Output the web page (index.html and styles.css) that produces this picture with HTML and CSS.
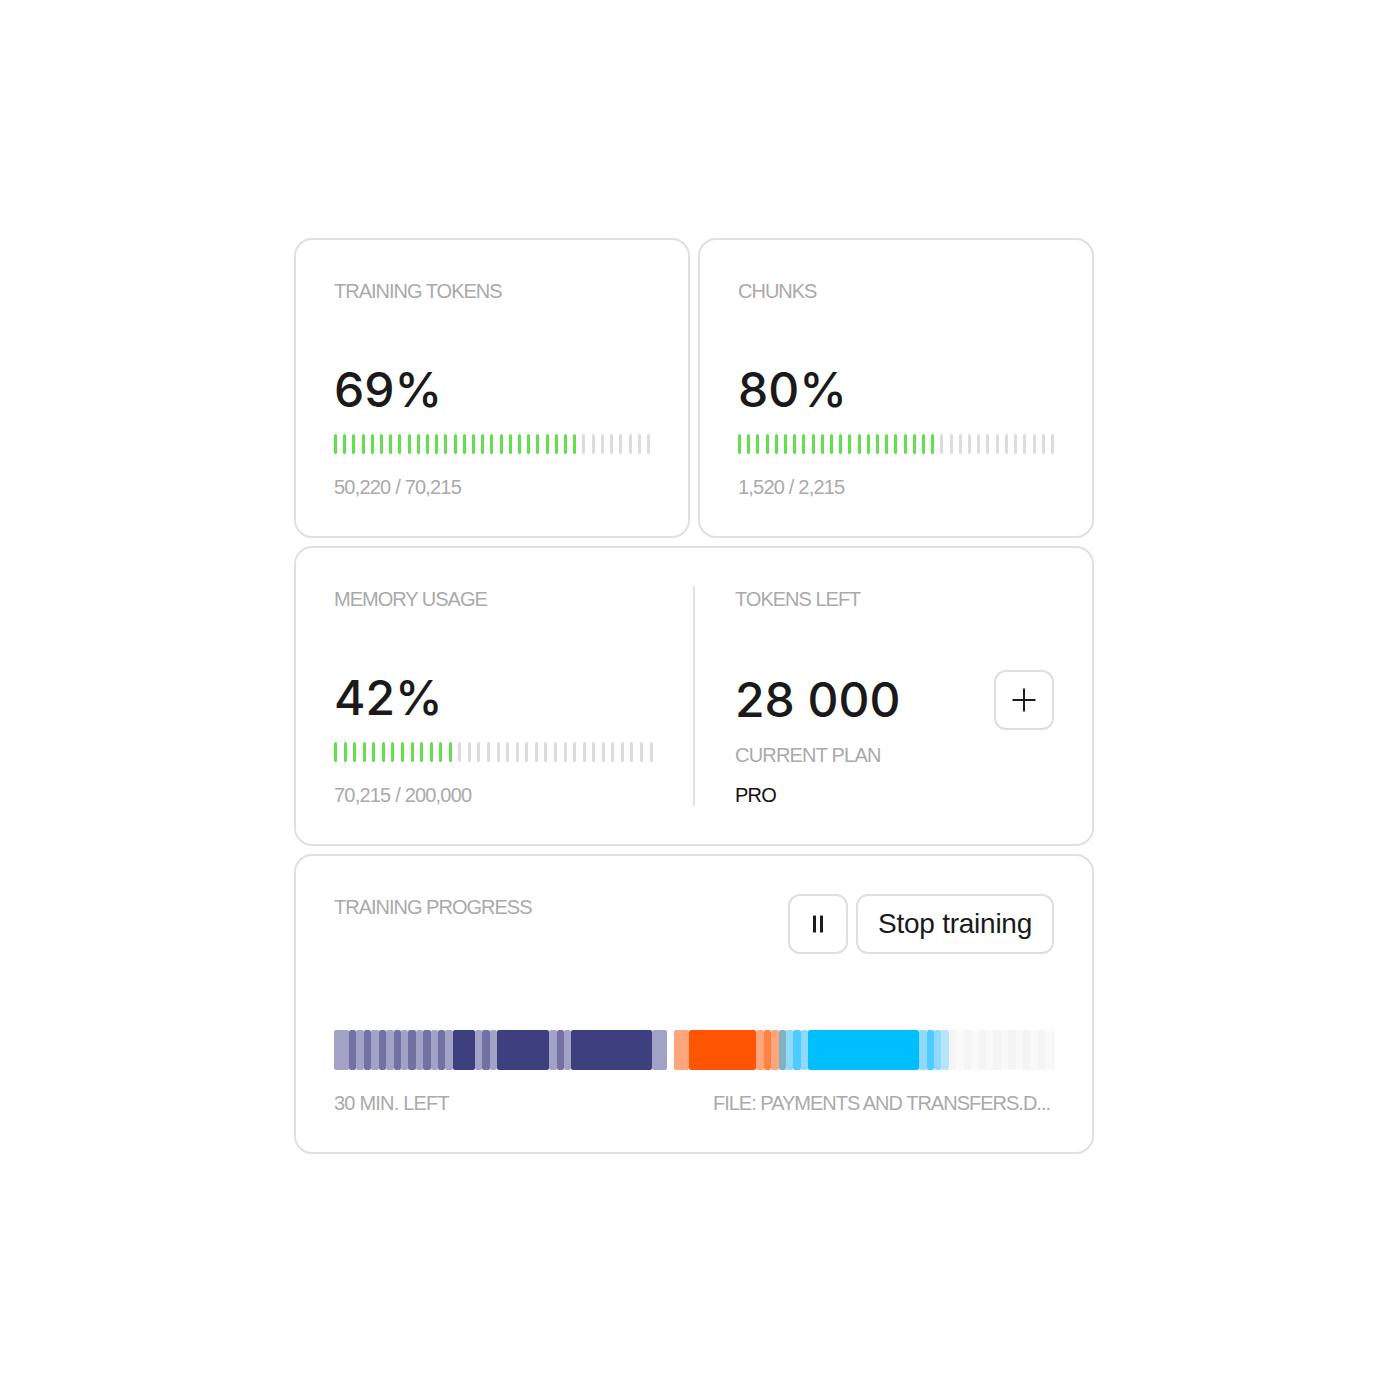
FILE: index.html
```html
<!DOCTYPE html>
<html lang="en">
<head>
<meta charset="utf-8">
<title>Training dashboard</title>
<link rel="stylesheet" href="styles.css">
</head>
<body>
<main class="board">
  <div class="row-two">
    <section class="card">
      <div class="label">TRAINING TOKENS</div>
      <div class="stat-bottom">
        <div class="big">69%</div>
        <div class="ticks">
          <i class="on"></i><i class="on"></i><i class="on"></i><i class="on"></i><i class="on"></i><i class="on"></i><i class="on"></i><i class="on"></i><i class="on"></i><i class="on"></i><i class="on"></i><i class="on"></i><i class="on"></i><i class="on"></i><i class="on"></i><i class="on"></i><i class="on"></i><i class="on"></i><i class="on"></i><i class="on"></i><i class="on"></i><i class="on"></i><i class="on"></i><i class="on"></i><i class="on"></i><i class="on"></i><i class="on"></i><i></i><i></i><i></i><i></i><i></i><i></i><i></i><i></i>
        </div>
        <div class="sub">50,220 / 70,215</div>
      </div>
    </section>
    <section class="card">
      <div class="label">CHUNKS</div>
      <div class="stat-bottom">
        <div class="big">80%</div>
        <div class="ticks">
          <i class="on"></i><i class="on"></i><i class="on"></i><i class="on"></i><i class="on"></i><i class="on"></i><i class="on"></i><i class="on"></i><i class="on"></i><i class="on"></i><i class="on"></i><i class="on"></i><i class="on"></i><i class="on"></i><i class="on"></i><i class="on"></i><i class="on"></i><i class="on"></i><i class="on"></i><i class="on"></i><i class="on"></i><i class="on"></i><i></i><i></i><i></i><i></i><i></i><i></i><i></i><i></i><i></i><i></i><i></i><i></i><i></i>
        </div>
        <div class="sub">1,520 / 2,215</div>
      </div>
    </section>
  </div>

  <section class="card split">
    <div class="half">
      <div class="label">MEMORY USAGE</div>
      <div class="stat-bottom">
        <div class="big">42%</div>
        <div class="ticks">
          <i class="on"></i><i class="on"></i><i class="on"></i><i class="on"></i><i class="on"></i><i class="on"></i><i class="on"></i><i class="on"></i><i class="on"></i><i class="on"></i><i class="on"></i><i class="on"></i><i class="on"></i><i></i><i></i><i></i><i></i><i></i><i></i><i></i><i></i><i></i><i></i><i></i><i></i><i></i><i></i><i></i><i></i><i></i><i></i><i></i><i></i><i></i>
        </div>
        <div class="sub">70,215 / 200,000</div>
      </div>
    </div>
    <div class="divider"></div>
    <div class="half">
      <div class="label">TOKENS LEFT</div>
      <div class="stat-bottom">
        <div class="num-row">
          <div class="big">28 000</div>
          <button class="icon-btn" type="button" aria-label="Add tokens">
            <svg width="24" height="24" viewBox="0 0 24 24" fill="none" stroke="#1c1c1c" stroke-width="2" stroke-linecap="butt"><path d="M12 0.5V23.5M0.5 12H23.5"/></svg>
          </button>
        </div>
        <div class="sub plan-label">CURRENT PLAN</div>
        <div class="sub plan">PRO</div>
      </div>
    </div>
  </section>

  <section class="card">
    <div class="head">
      <div class="label">TRAINING PROGRESS</div>
      <div class="actions">
        <button class="icon-btn" type="button" aria-label="Pause">
          <svg width="12" height="18" viewBox="0 0 12 18" fill="#1c1c1c"><rect x="1" y="0.5" width="3" height="17" rx="0.5"/><rect x="8" y="0.5" width="3" height="17" rx="0.5"/></svg>
        </button>
        <button class="text-btn" type="button">Stop training</button>
      </div>
    </div>
    <div class="stat-bottom">
      <div class="bar">
        <div class="group">
          <span class="seg l" style="width:15px"></span>
          <span class="seg d" style="width:7.43px"></span><span class="seg l" style="width:7.43px"></span>
          <span class="seg d" style="width:7.43px"></span><span class="seg l" style="width:7.43px"></span>
          <span class="seg d" style="width:7.43px"></span><span class="seg l" style="width:7.43px"></span>
          <span class="seg d" style="width:7.43px"></span><span class="seg l" style="width:7.43px"></span>
          <span class="seg d" style="width:7.43px"></span><span class="seg l" style="width:7.43px"></span>
          <span class="seg d" style="width:7.43px"></span><span class="seg l" style="width:7.43px"></span>
          <span class="seg d" style="width:7.43px"></span><span class="seg l" style="width:7.43px"></span>
          <span class="seg n" style="width:22px"></span>
          <span class="seg l" style="width:7.43px"></span><span class="seg d" style="width:7.43px"></span><span class="seg l" style="width:7.43px"></span>
          <span class="seg n" style="width:52px"></span>
          <span class="seg l" style="width:7.43px"></span><span class="seg d" style="width:7.43px"></span><span class="seg l" style="width:7.43px"></span>
          <span class="seg n" style="width:81px"></span>
          <span class="seg l" style="width:15px"></span>
        </div>
        <div class="group grow">
          <span class="seg lo" style="width:15px"></span>
          <span class="seg o" style="width:67px"></span>
          <span class="seg lo" style="width:7.4px"></span>
          <span class="seg mo" style="width:7.4px"></span>
          <span class="seg lo" style="width:7.4px"></span>
          <span class="seg teal" style="width:7.4px"></span>
          <span class="seg lb" style="width:7.4px"></span>
          <span class="seg mb" style="width:7.4px"></span>
          <span class="seg lb" style="width:7.4px"></span>
          <span class="seg b" style="width:111px"></span>
          <span class="seg lb" style="width:7.4px"></span>
          <span class="seg mb" style="width:7.4px"></span>
          <span class="seg lb" style="width:7.4px"></span>
          <span class="seg pb" style="width:7.4px"></span>
          <span class="seg rest"></span>
        </div>
      </div>
      <div class="foot">
        <span class="sub">30 MIN. LEFT</span>
        <span class="sub file">FILE: PAYMENTS AND TRANSFERS.D...</span>
      </div>
    </div>
  </section>
</main>
</body>
</html>
```

FILE: styles.css
```css
* { box-sizing: border-box; }

html, body { margin: 0; padding: 0; background: #ffffff; }

body {
  min-height: 100vh;
  display: flex;
  align-items: center;
  justify-content: center;
  font-family: "Liberation Sans", Arial, sans-serif;
  color: #1c1c1c;
}

.board {
  width: 800px;
  display: flex;
  flex-direction: column;
  gap: 8px;
  margin-left: -2px;
  margin-top: 2px;
}

.row-two {
  display: grid;
  grid-template-columns: 1fr 1fr;
  gap: 8px;
}

.card {
  height: 300px;
  border: 2px solid #e0e0e0;
  border-radius: 18px;
  padding: 38px;
  display: flex;
  flex-direction: column;
  justify-content: space-between;
  background: #fff;
}

.label {
  font-size: 20px;
  line-height: 26px;
  letter-spacing: -1px;
  color: #aaaaaa;
  white-space: nowrap;
}

.sub {
  font-size: 20px;
  line-height: 22px;
  letter-spacing: -0.8px;
  color: #aaaaaa;
  white-space: nowrap;
}

.stat-bottom {
  display: flex;
  flex-direction: column;
}

.big {
  font-family: Inter, "Liberation Sans", sans-serif;
  font-weight: 500;
  font-size: 48px;
  line-height: 48px;
  color: #1a1a1a;
  margin-bottom: 20px;
  white-space: nowrap;
}

.ticks {
  display: flex;
  justify-content: space-between;
  height: 20px;
  margin-bottom: 22px;
}

.ticks i {
  display: block;
  width: 3px;
  height: 20px;
  border-radius: 1.5px;
  background: #dcdcdc;
}

.ticks i.on { background: #62e04b; }

/* split card */
.split {
  flex-direction: row;
  justify-content: flex-start;
  gap: 40px;
}

.half {
  flex: 1 1 0;
  display: flex;
  flex-direction: column;
  justify-content: space-between;
}

.divider {
  width: 2px;
  background: #e2e2e2;
  align-self: stretch;
}

.num-row {
  display: flex;
  align-items: center;
  justify-content: space-between;
  height: 60px;
  margin-bottom: 14px;
}

.num-row .big { margin-bottom: 0; }

.plan-label { margin-bottom: 18px; }

.plan { color: #111; }

.icon-btn {
  width: 60px;
  height: 60px;
  padding: 0;
  border: 2px solid #dedede;
  border-radius: 12px;
  background: #fff;
  display: flex;
  align-items: center;
  justify-content: center;
}

.icon-btn svg { display: block; }

/* progress card */
.head {
  display: flex;
  justify-content: space-between;
  align-items: flex-start;
}

.actions {
  display: flex;
  gap: 8px;
}

.text-btn {
  height: 60px;
  padding: 0 20px;
  border: 2px solid #dedede;
  border-radius: 12px;
  background: #fff;
  font-family: "Liberation Sans", Arial, sans-serif;
  font-size: 28px;
  letter-spacing: -0.25px;
  color: #1a1a1a;
  white-space: nowrap;
}

.bar {
  display: flex;
  gap: 7px;
  height: 40px;
  margin-bottom: 22px;
}

.group {
  display: flex;
  height: 40px;
}

.group.grow { flex: 1 1 auto; }

.seg {
  display: block;
  height: 40px;
  border-radius: 2px;
  flex: 0 0 auto;
}

.seg.l { background: #a2a1c6; }
.seg.d { background: #7371a4; }
.seg.n { background: #3e3f7e; }
.seg.lo { background: #ffa57b; }
.seg.o { background: #ff5500; }
.seg.mo { background: #ff8443; }
.seg.teal { background: #80b2c2; }
.seg.lb { background: #8fd9fd; }
.seg.mb { background: #4ecbff; }
.seg.b { background: #00bfff; }
.seg.pb { background: #b6e5fa; }

.seg.rest {
  flex: 1 1 auto;
  background: repeating-linear-gradient(90deg, #f4f4f4 0, #f4f4f4 7.4px, #f9f9f9 7.4px, #f9f9f9 14.8px);
}

.foot {
  display: flex;
  justify-content: space-between;
}

.sub.file {
  letter-spacing: -1px;
  padding-right: 4px;
}
```
